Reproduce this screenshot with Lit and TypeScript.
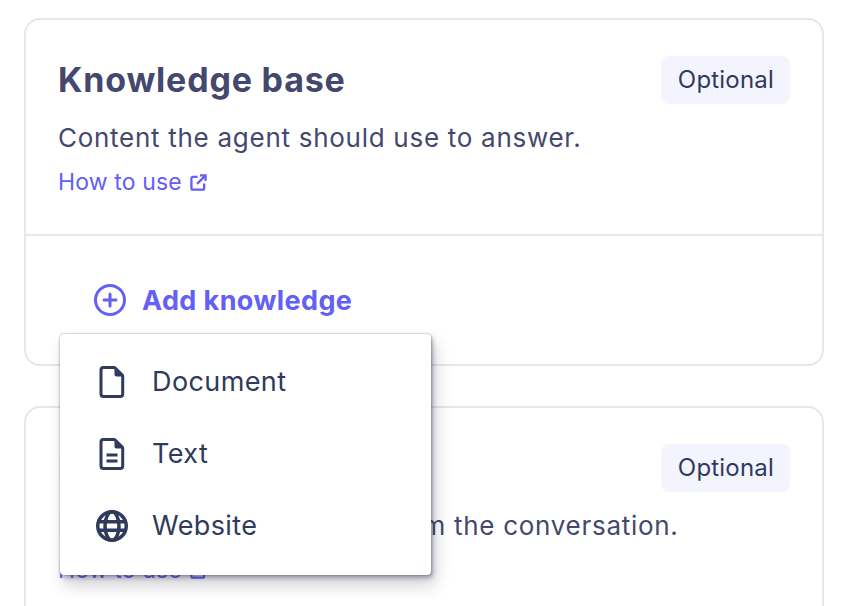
import {LitElement, html, css, svg} from 'lit';
import {customElement} from 'lit/decorators.js';

const fileBody = svg`
    <path d="M5 1.500h10.500c.5 0 .9.2 1.200.5l7 7c.3.3.500.7.500 1.100V28c0 1.400-1.100 2.500-2.500 2.500H5C3.600 30.500 2.500 29.400 2.500 28V4C2.500 2.600 3.600 1.500 5 1.500z" fill="none" stroke="currentColor" stroke-width="3"/>
    <path d="M16 1.500l9 9h-7a2 2 0 0 1-2-2z" fill="currentColor"/>
`;

@customElement('app-root')
export class AppRoot extends LitElement {
    static styles = css`
        :host {
            display: block;
            height: 606px;
            overflow: hidden;
            box-sizing: border-box;
            padding: 18px 24px 0;
            background: #fff;
            font-family: "Inter", "Liberation Sans", sans-serif;
        }

        .stack {
            display: flex;
            flex-direction: column;
            gap: 40px;
        }

        .card {
            border: 2px solid #e6e6ec;
            border-radius: 16px;
        }

        .head {
            padding: 36px 32px 0;
            height: 214px;
            box-sizing: border-box;
        }

        .title-row {
            display: flex;
            justify-content: space-between;
            align-items: center;
            height: 48px;
        }

        h2 {
            margin: 0 0 2px;
            font-size: 34px;
            font-weight: 700;
            letter-spacing: 0.8px;
            color: #44486e;
        }

        .badge {
            padding: 0 16px 0 16.500px;
            height: 48px;
            line-height: 48px;
            border-radius: 8px;
            background: #f4f4fe;
            color: #2f3a5c;
            font-size: 24px;
            letter-spacing: 0.2px;
        }

        p {
            margin: 16px 0 0;
            font-size: 26px;
            line-height: 36px;
            letter-spacing: 0.72px;
            color: #44486e;
        }

        .link {
            display: flex;
            align-items: center;
            gap: 8px;
            margin-top: 9px;
            font-size: 23px;
            line-height: 34px;
            letter-spacing: 0.13px;
            color: #6360f5;
        }

        .body {
            position: relative;
            height: 130px;
            border-top: 2px solid #e6e6ec;
            box-sizing: border-box;
            display: flex;
            align-items: center;
            padding-left: 68px;
        }

        .add {
            display: flex;
            align-items: center;
            gap: 16px;
            font-size: 27px;
            font-weight: 700;
            letter-spacing: 0.4px;
            color: #6360f5;
        }

        .menu {
            position: absolute;
            z-index: 2;
            left: 34px;
            top: 98px;
            width: 371px;
            box-sizing: border-box;
            padding: 12px 0 13px;
            background: #fff;
            border-radius: 4px;
            box-shadow: 0 0 2px rgba(40, 40, 80, 0.5), 2px 3px 4px rgba(40, 40, 70, 0.35), 4px 10px 16px rgba(40, 40, 70, 0.22);
        }

        .item {
            display: flex;
            align-items: center;
            height: 72px;
            padding-left: 36px;
            gap: 24px;
            font-size: 27px;
            letter-spacing: 0.4px;
            color: #2f3a5c;
        }

        .item span {
            position: relative;
            top: -1px;
        }

        svg {
            display: block;
            flex: none;
        }
    `;

    renderHead(title: string, desc: string) {
        return html`
            <div class="head">
                <div class="title-row">
                    <h2>${title}</h2>
                    <span class="badge">Optional</span>
                </div>
                <p>${desc}</p>
                <div class="link">
                    How to use
                    <svg width="17" height="17" viewBox="0 0 18 18" fill="none" stroke="currentColor" stroke-width="2.400">
                        <path d="M8 3H3a1.500 1.500 0 0 0-1.500 1.500V15A1.500 1.500 0 0 0 3 16.500h10.500A1.500 1.500 0 0 0 15 15v-5"/>
                        <path d="M7.500 10.500L16 2M10.500 1.500h6v6"/>
                    </svg>
                </div>
            </div>
        `;
    }

    render() {
        return html`
            <div class="stack">
                <section class="card">
                    ${this.renderHead('Knowledge base', 'Content the agent should use to answer.')}
                    <div class="body">
                        <div class="add">
                            <svg width="32" height="32" viewBox="0 0 32 32" fill="none" stroke="currentColor" stroke-width="3" stroke-linecap="round">
                                <circle cx="16" cy="16" r="14.500"/>
                                <path d="M16 10v12M10 16h12"/>
                            </svg>
                            Add knowledge
                        </div>
                        <div class="menu">
                            <div class="item">
                                <svg width="32" height="32" viewBox="-2.500 0 32 32">${fileBody}</svg>
                                <span>Document</span>
                            </div>
                            <div class="item">
                                <svg width="32" height="32" viewBox="-2.500 0 32 32">
                                    ${fileBody}
                                    <path d="M8 17h11M8 23h11" fill="none" stroke="currentColor" stroke-width="3"/>
                                </svg>
                                <span>Text</span>
                            </div>
                            <div class="item">
                                <svg width="32" height="32" viewBox="0 0 32 32" fill="none" stroke="currentColor" stroke-width="3.500">
                                    <circle cx="16" cy="16" r="14.250"/>
                                    <ellipse cx="16" cy="16" rx="7" ry="14.250"/>
                                    <path d="M2 11.700h28M2 20.300h28"/>
                                </svg>
                                <span>Website</span>
                            </div>
                        </div>
                    </div>
                </section>
                <section class="card">
                    ${this.renderHead('Data extraction', 'Information to be parsed from the conversation.')}
                </section>
            </div>
        `;
    }
}
